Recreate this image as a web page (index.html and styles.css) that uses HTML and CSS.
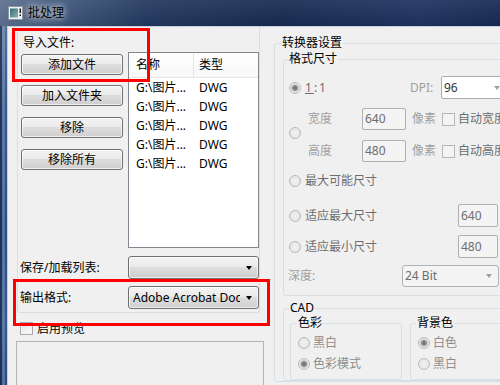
FILE: index.html
```html
<!DOCTYPE html>
<html lang="zh-CN">
<head>
<meta charset="utf-8">
<title>批处理</title>
<link rel="stylesheet" href="styles.css">
</head>
<body>
<div class="window">
  <div class="titlebar">
    <svg class="app-icon" width="15" height="14" viewBox="0 0 15 14">
      <defs>
        <linearGradient id="ig" x1="0" y1="0" x2="1" y2="1">
          <stop offset="0" stop-color="#2f6f73"/>
          <stop offset="1" stop-color="#8fb0b4"/>
        </linearGradient>
      </defs>
      <rect x="0.5" y="0.5" width="14" height="13" fill="#eef0f2" stroke="#8d969f"/>
      <rect x="2" y="2.5" width="8" height="9" fill="url(#ig)"/>
      <rect x="11.5" y="2.5" width="1.5" height="4.5" fill="#1a1a1a"/>
      <rect x="11.5" y="8.5" width="1.5" height="1.5" fill="#1a1a1a"/>
    </svg>
    <span class="title">批处理</span>
  </div>
  <div class="frame">
    <div class="frame-left"></div>
    <div class="client">
      <div class="left-col">
        <div class="import-group">
          <div class="group-label">导入文件:</div>
          <div class="import-body">
            <div class="btn-col">
              <button class="btn">添加文件</button>
              <button class="btn">加入文件夹</button>
              <button class="btn">移除</button>
              <button class="btn">移除所有</button>
            </div>
            <div class="listview">
              <div class="lv-header">
                <span class="lv-c1">名称</span>
                <span class="lv-c2">类型</span>
              </div>
              <div class="lv-row"><span class="lv-c1">G:\图片...</span><span class="lv-c2">DWG</span></div>
              <div class="lv-row"><span class="lv-c1">G:\图片...</span><span class="lv-c2">DWG</span></div>
              <div class="lv-row"><span class="lv-c1">G:\图片...</span><span class="lv-c2">DWG</span></div>
              <div class="lv-row"><span class="lv-c1">G:\图片...</span><span class="lv-c2">DWG</span></div>
              <div class="lv-row"><span class="lv-c1">G:\图片...</span><span class="lv-c2">DWG</span></div>
            </div>
          </div>
          <div class="form-row first">
            <span class="form-label">保存/加载列表:</span>
            <div class="combo"><span class="combo-text"></span><span class="arrow"></span></div>
          </div>
          <div class="form-row">
            <span class="form-label">输出格式:</span>
            <div class="combo"><span class="combo-text">Adobe Acrobat Document</span><span class="arrow"></span></div>
          </div>
        </div>
        <div class="check-row preview-check"><span class="checkbox"></span><span>启用预览</span></div>
        <div class="preview"></div>
      </div>

      <div class="right-col">
        <fieldset class="group outer">
          <legend>转换器设置</legend>
          <fieldset class="group fmt">
            <legend>格式尺寸</legend>
            <div class="row r-ratio">
              <div class="opt w-ratio"><span class="radio on"></span><span class="gray ratio"><span class="ul">1</span>:1</span></div>
              <span class="light dpi-label">DPI:</span>
              <div class="combo white dpi"><span class="combo-text">96</span><span class="arrow grey"></span></div>
            </div>
            <div class="row r-size">
              <span class="radio size-radio"></span>
              <div class="size-rows">
                <div class="size-row">
                  <span class="light size-label">宽度</span>
                  <span class="input w44">640</span>
                  <span class="light unit">像素</span>
                  <span class="checkbox dis"></span>
                  <span class="gray auto">自动宽度</span>
                </div>
                <div class="size-row">
                  <span class="light size-label">高度</span>
                  <span class="input w44">480</span>
                  <span class="light unit">像素</span>
                  <span class="checkbox dis"></span>
                  <span class="gray auto">自动高度</span>
                </div>
              </div>
            </div>
            <div class="row r-max">
              <div class="opt"><span class="radio"></span><span class="gray">最大可能尺寸</span></div>
            </div>
            <div class="row r-fitmax">
              <div class="opt w-fit"><span class="radio"></span><span class="gray">适应最大尺寸</span></div>
              <span class="input w40">640</span>
            </div>
            <div class="row r-fitmin">
              <div class="opt w-fit"><span class="radio"></span><span class="gray">适应最小尺寸</span></div>
              <span class="input w40">480</span>
            </div>
            <div class="row r-depth">
              <span class="light depth-label">深度:</span>
              <div class="combo flat depth"><span class="combo-text">24 Bit</span><span class="arrow grey"></span></div>
            </div>
          </fieldset>
          <fieldset class="group cad">
            <legend>CAD</legend>
            <div class="cad-body">
              <fieldset class="group sub color">
                <legend>色彩</legend>
                <div class="opt sub-opt first"><span class="radio"></span><span class="mid">黑白</span></div>
                <div class="opt sub-opt"><span class="radio on"></span><span class="mid">色彩模式</span></div>
              </fieldset>
              <fieldset class="group sub bg">
                <legend>背景色</legend>
                <div class="opt sub-opt first"><span class="radio on"></span><span class="mid">白色</span></div>
                <div class="opt sub-opt"><span class="radio"></span><span class="mid">黑白</span></div>
              </fieldset>
            </div>
          </fieldset>
        </fieldset>
      </div>
    </div>
  </div>
  <div class="highlight hl-import"></div>
  <div class="highlight hl-format"></div>
</div>
</body>
</html>
```

FILE: styles.css
```css
* { box-sizing: border-box; }
html, body { margin: 0; padding: 0; }
body {
  width: 500px;
  height: 385px;
  overflow: hidden;
  background: #f0f0f0;
  font-family: "Noto Sans", "Noto Sans CJK SC", sans-serif;
  font-size: 12px;
  line-height: 14px;
  color: #000;
}
.window {
  position: relative;
  width: 540px;
  height: 385px;
  display: flex;
  flex-direction: column;
}

/* title bar */
.titlebar {
  flex: none;
  height: 26px;
  display: flex;
  align-items: center;
  gap: 5px;
  padding-left: 8px;
  background:
    linear-gradient(to bottom, rgba(255,255,255,0.07), rgba(0,0,0,0.06)),
    linear-gradient(to right, #5d7190 0, #40577c 60px, #22385f 150px, #182b52 280px, #1e3360 420px, #15284f 520px);
}
.app-icon { flex: none; display: block; }
.title {
  font-size: 12px;
  line-height: 14px;
  color: #000;
  text-shadow: 0 0 6px rgba(255,255,255,0.9), 0 0 10px rgba(255,255,255,0.6);
}

/* frame */
.frame {
  flex: 1;
  display: flex;
  min-height: 0;
}
.frame-left {
  flex: none;
  width: 7px;
  background:
    linear-gradient(to right, rgba(10,20,45,0.5) 0 2px, rgba(255,255,255,0.2) 2px 5px, rgba(0,0,0,0) 5px),
    linear-gradient(to bottom, #56709a 0, #35588c 80px, #2a4f88 200px, #32598f 300px, #284a80 360px);
}
.client {
  flex: 1;
  display: flex;
  align-items: flex-start;
  border-top: 1px solid #c6cfda;
  border-left: 1px solid #c6cfda;
  background: #f0f0f0;
}

/* left column */
.left-col {
  flex: none;
  width: 258px;
  margin-left: 8px;
  display: flex;
  flex-direction: column;
}
.import-group {
  margin-left: 1px;
  width: 243px;
  padding: 9px 0 3px 0;
  border: 1px solid #d5dfe5;
  border-top: none;
  border-radius: 0 0 3px 3px;
}
.group-label { padding-left: 5px; line-height: 14px; }
.import-body {
  display: flex;
  gap: 5px;
  margin-top: 2px;
}
.btn-col {
  display: flex;
  flex-direction: column;
  padding-left: 3px;
  padding-top: 2px;
}
.btn {
  width: 102px;
  height: 21px;
  padding: 0;
  margin: 0 0 10px 0;
  border: 1px solid #707070;
  border-radius: 3px;
  background: linear-gradient(to bottom, #f3f3f3 0%, #ebebeb 45%, #dddddd 50%, #cfcfcf 100%);
  box-shadow: inset 0 0 0 1px rgba(255,255,255,0.65);
  font: inherit;
  line-height: 14px;
  color: #000;
}
.btn:nth-child(2), .btn:nth-child(3) { margin-bottom: 11px; }

.listview {
  width: 131px;
  height: 196px;
  border: 1px solid #828790;
  background: #fff;
}
.lv-header {
  display: flex;
  height: 25px;
  align-items: stretch;
  border-bottom: 1px solid #e5e5e5;
  background: linear-gradient(to bottom, #ffffff, #f7f8f9);
}
.lv-header span { display: flex; align-items: center; }
.lv-c1 { width: 65px; padding-left: 7px; white-space: nowrap; }
.lv-header .lv-c1 { border-right: 1px solid #e3e4e6; }
.lv-c2 { padding-left: 5px; }
.lv-row .lv-c1 { width: 64px; }
.lv-row .lv-c2 { padding-left: 6px; }
.lv-row {
  display: flex;
  align-items: center;
  height: 19px;
}

.form-row {
  display: flex;
  align-items: center;
  margin-top: 7px;
  padding-left: 2px;
}
.form-row.first { margin-top: 8px; }
.form-label { width: 108px; }

.combo {
  display: flex;
  align-items: center;
  width: 131px;
  height: 23px;
  padding: 0 6px 0 4px;
  border: 1px solid #707070;
  border-radius: 3px;
  background: linear-gradient(to bottom, #f3f3f3 0%, #ebebeb 45%, #dddddd 50%, #cfcfcf 100%);
  box-shadow: inset 0 0 0 1px rgba(255,255,255,0.65);
}
.combo-text {
  flex: 1;
  min-width: 0;
  margin-right: 6px;
  overflow: hidden;
  white-space: nowrap;
}
.arrow {
  flex: none;
  width: 0;
  height: 0;
  border-left: 3.5px solid transparent;
  border-right: 3.5px solid transparent;
  border-top: 4px solid #000;
}
.arrow.grey { border-top-color: #a0a0a0; }

.check-row {
  display: flex;
  align-items: center;
  gap: 4px;
}
.preview-check { margin-top: 9px; padding-left: 4px; height: 13px; }
.checkbox {
  flex: none;
  width: 13px;
  height: 13px;
  border: 1px solid #a8a8a8;
  background: linear-gradient(135deg, #e2e2e2, #fbfbfb);
  box-shadow: inset 0 0 0 1px #f4f4f4;
}
.checkbox.dis {
  border-color: #b6b6b6;
  background: #f4f4f4;
}
.preview {
  margin-top: 6px;
  width: 248px;
  height: 60px;
  border: 1px solid #b4b4b4;
  background: #f0f0f0;
}

/* right column */
.right-col {
  flex: none;
  margin-top: 9px;
}
fieldset.group {
  margin: 0;
  padding: 0;
  min-inline-size: 0;
  border: 1px solid #d5dfe5;
  border-radius: 3px;
}
fieldset.group > legend {
  padding: 0 1px;
  line-height: 14px;
}
.outer {
  width: 260px;
  padding: 0 0 0 8px !important;
}
.outer > legend { margin-left: -2px; }
.fmt {
  margin-top: 2px !important;
  padding: 0 0 8px 5px !important;
}
.fmt > legend { margin-left: -1px; }

.row { display: flex; align-items: center; }
.opt { display: flex; align-items: center; gap: 4px; }
.radio {
  flex: none;
  width: 12px;
  height: 12px;
  border-radius: 50%;
  border: 1px solid #b9b9b9;
  background: radial-gradient(circle at 50% 50%, #f3f3f3 0, #e6e6e6 70%, #dadada 100%);
}
.radio.on {
  background: radial-gradient(circle at 50% 50%, #6a6a6a 0, #858585 2px, #b9b9b9 3.2px, #e4e4e4 4px, #f0f0f0 6px);
}
.gray { color: #6d6d6d; }
.light { color: #a0a0a0; }
.mid { color: #8d8d8d; }
.ul { text-decoration: underline; }
.ratio { letter-spacing: 2px; }

.r-ratio { margin-top: 10px; height: 23px; }
.w-ratio { width: 121px; }
.dpi-label { width: 31px; }
.combo.white {
  width: 66px;
  background: #fff;
  border-color: #abadb3;
  border-radius: 2px;
  box-shadow: none;
  padding-left: 2px;
  color: #333;
}
.dpi .combo-text { flex: none; width: 44px; margin-right: 6px; }

.r-size { margin-top: 9px; height: 54px; }
.size-radio { align-self: center; margin-bottom: 4px; }
.size-rows {
  display: flex;
  flex-direction: column;
  gap: 10px;
  margin-left: 7px;
}
.size-row { display: flex; align-items: center; height: 22px; }
.size-label { width: 54px; }
.input {
  flex: none;
  height: 22px;
  display: flex;
  align-items: center;
  padding-left: 2px;
  border: 1px solid #b0b0b0;
  border-radius: 2px;
  background: #f4f4f4;
  color: #6d6d6d;
}
.w44 { width: 44px; }
.w40 { width: 40px; height: 23px; }
.unit { margin-left: 6px; width: 30px; }
.auto { margin-left: 3px; white-space: nowrap; }

.r-max { margin-top: 8px; height: 22px; }
.r-fitmax { margin-top: 12px; height: 23px; }
.r-fitmin { margin-top: 8px; height: 23px; }
.w-fit { width: 169px; }
.r-depth { margin-top: 7px; height: 22px; margin-left: -1px; }
.depth-label { width: 114px; }
.combo.flat {
  width: 97px;
  height: 22px;
  border-color: #adb2b5;
  background: #f4f4f4;
  box-shadow: none;
  color: #6d6d6d;
  padding-left: 2px;
}

.cad {
  margin-top: 5px !important;
  padding: 0 0 0 6px !important;
}
.cad > legend { margin-left: -1px; }
.cad-body { display: flex; gap: 8px; margin-top: 1px; }
.sub { padding: 0 0 8px 7px !important; }
.sub > legend { margin-left: -1px; }
.bg > legend { margin-left: -2px; }
.color { width: 112px; }
.bg { width: 120px; }
.sub-opt { height: 14px; gap: 3px; margin-top: 7px; }
.sub-opt.first { margin-top: 6px; }

/* annotation overlays */
.highlight {
  position: absolute;
  border: 3px solid #ff0000;
  pointer-events: none;
}
.hl-import { left: 12px; top: 28px; width: 138px; height: 54px; }
.hl-format { left: 13px; top: 279px; width: 257px; height: 47px; }
```
